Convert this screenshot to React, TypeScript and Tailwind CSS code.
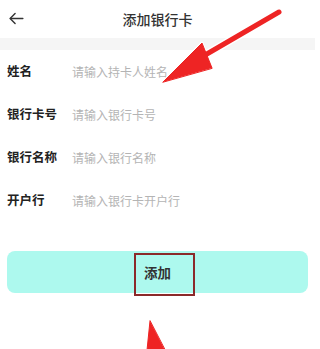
import React from "react";

const rows = [
  { label: "姓名", ph: "请输入持卡人姓名" },
  { label: "银行卡号", ph: "请输入银行卡号" },
  { label: "银行名称", ph: "请输入银行名称" },
  { label: "开户行", ph: "请输入银行卡开户行" },
];

export default function App() {
  return (
    <div
      className="relative w-[315px] h-[349px] overflow-hidden bg-white"
      style={{ fontFamily: '"Noto Sans CJK SC", "Noto Sans", sans-serif' }}
    >
      <div className="relative flex h-[38px] items-center justify-center">
        <svg
          className="absolute left-[8px] top-[10px]"
          width="17"
          height="17"
          viewBox="0 0 24 24"
          fill="none"
          stroke="#333"
          strokeWidth="2"
          strokeLinecap="round"
          strokeLinejoin="round"
        >
          <path d="M21 12H3.5" />
          <path d="M10 5l-7 7 7 7" />
        </svg>
        <span className="text-[14px] text-[#333] font-medium">添加银行卡</span>
      </div>
      <div className="h-[12px] bg-[#f5f5f5]" />
      <div className="flex flex-col">
        {rows.map((r) => (
          <div key={r.label} className="flex h-[43px] items-center px-[7px]">
            <span className="w-[65px] text-[12.5px] font-bold text-[#222]">{r.label}</span>
            <span className="text-[12px] text-[#b4b4b4]">{r.ph}</span>
          </div>
        ))}
      </div>
      <div className="mx-[7px] mt-[29px] flex h-[42px] items-center justify-center rounded-[8px] bg-[#adf9ee]">
        <span className="relative text-[13.5px] font-bold text-[#333]">
          添加
          <span className="absolute left-[-10px] right-[-24px] top-[-9px] bottom-[-14px] border-2 border-[#8b2a2a]" />
        </span>
      </div>
      <svg className="absolute left-0 top-0" width="315" height="349" viewBox="0 0 315 349">
        <g stroke="#ffffff" strokeWidth="3" strokeLinejoin="round" strokeLinecap="round" fill="#ffffff">
          <line x1="279" y1="12" x2="200" y2="58" strokeWidth="8" />
          <polygon points="163,82 202,43 212,68" />
          <polygon points="150,321 146,360 170,360" />
        </g>
        <g fill="#ee2424" stroke="#ee2424" strokeLinejoin="round" strokeLinecap="round">
          <line x1="279" y1="12" x2="200" y2="58" strokeWidth="5" />
          <polygon points="163,82 202,43 212,68" strokeWidth="1" />
          <polygon points="150,321 146,360 170,360" strokeWidth="1" />
        </g>
      </svg>
    </div>
  );
}
